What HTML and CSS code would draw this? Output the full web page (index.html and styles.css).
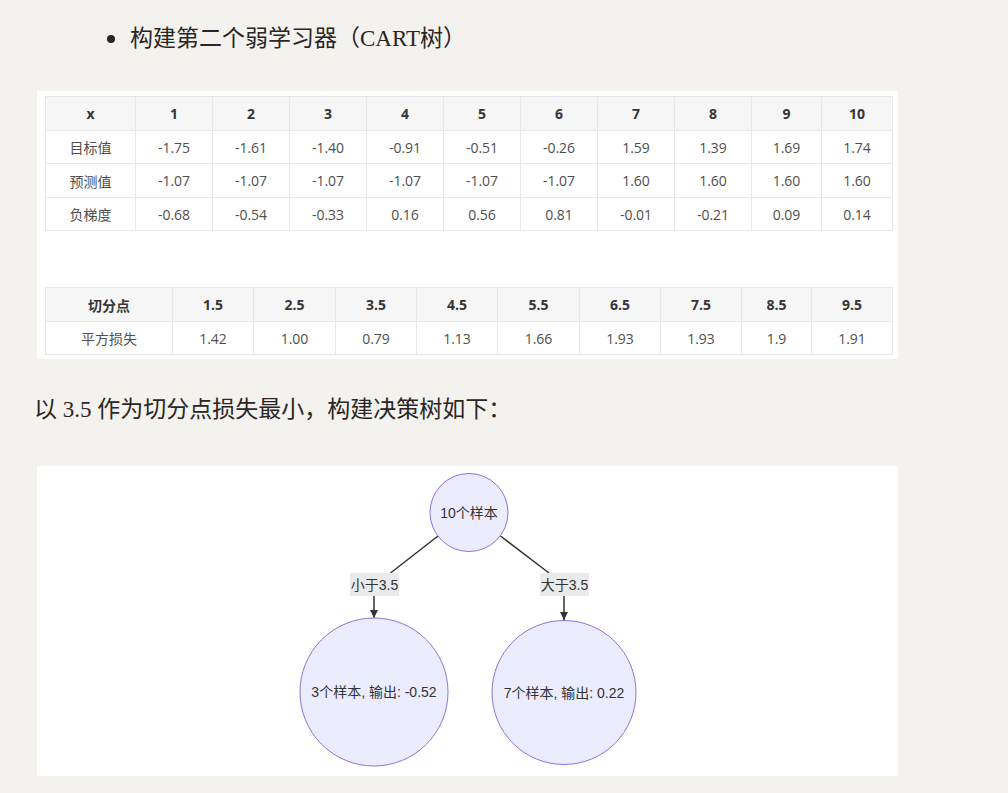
FILE: index.html
```html
<!DOCTYPE html>
<html lang="zh-CN">
<head>
<meta charset="utf-8">
<title>CART</title>
<link rel="stylesheet" href="styles.css">
</head>
<body>
<div class="content">
  <ul class="list">
    <li>构建第二个弱学习器（CART树）</li>
  </ul>

  <div class="panel panel-tables">
    <table class="grid t1">
      <colgroup>
        <col class="w90"><col class="w77"><col class="w77"><col class="w77"><col class="w77"><col class="w77"><col class="w77"><col class="w77"><col class="w77"><col class="w70"><col class="w71">
      </colgroup>
      <thead>
        <tr class="r34"><th>x</th><th>1</th><th>2</th><th>3</th><th>4</th><th>5</th><th>6</th><th>7</th><th>8</th><th>9</th><th>10</th></tr>
      </thead>
      <tbody>
        <tr class="r33"><td>目标值</td><td>-1.75</td><td>-1.61</td><td>-1.40</td><td>-0.91</td><td>-0.51</td><td>-0.26</td><td>1.59</td><td>1.39</td><td>1.69</td><td>1.74</td></tr>
        <tr class="r34"><td>预测值</td><td>-1.07</td><td>-1.07</td><td>-1.07</td><td>-1.07</td><td>-1.07</td><td>-1.07</td><td>1.60</td><td>1.60</td><td>1.60</td><td>1.60</td></tr>
        <tr class="r33"><td>负梯度</td><td>-0.68</td><td>-0.54</td><td>-0.33</td><td>0.16</td><td>0.56</td><td>0.81</td><td>-0.01</td><td>-0.21</td><td>0.09</td><td>0.14</td></tr>
      </tbody>
    </table>

    <table class="grid t2">
      <colgroup>
        <col class="w127"><col class="w81"><col class="w82"><col class="w81"><col class="w81"><col class="w82"><col class="w81"><col class="w81"><col class="w70"><col class="w81">
      </colgroup>
      <thead>
        <tr class="r34"><th>切分点</th><th>1.5</th><th>2.5</th><th>3.5</th><th>4.5</th><th>5.5</th><th>6.5</th><th>7.5</th><th>8.5</th><th>9.5</th></tr>
      </thead>
      <tbody>
        <tr class="r33"><td>平方损失</td><td>1.42</td><td>1.00</td><td>0.79</td><td>1.13</td><td>1.66</td><td>1.93</td><td>1.93</td><td>1.9</td><td>1.91</td></tr>
      </tbody>
    </table>
  </div>

  <p class="para">以 3.5 作为切分点损失最小，构建决策树如下：</p>

  <div class="panel panel-diagram">
    <svg class="tree" width="861" height="310" viewBox="0 0 861 310" xmlns="http://www.w3.org/2000/svg">
      <defs>
        <marker id="arrow" viewBox="0 0 10 10" refX="10" refY="5" markerWidth="8" markerHeight="8" markerUnits="userSpaceOnUse" orient="auto">
          <path d="M0,0 L10,5 L0,10 Z" fill="#333"/>
        </marker>
      </defs>
      <line class="edge" x1="401" y1="70" x2="353.5" y2="107"/>
      <line class="edge" x1="463.5" y1="70" x2="512" y2="107"/>
      <line class="edge" x1="337" y1="130" x2="337" y2="152" marker-end="url(#arrow)"/>
      <line class="edge" x1="527" y1="130" x2="527" y2="154" marker-end="url(#arrow)"/>

      <rect class="lbl" x="313" y="107" width="49" height="23"/>
      <text class="txt" x="337.5" y="119">小于3.5</text>
      <rect class="lbl" x="503" y="107" width="49" height="23"/>
      <text class="txt" x="527.5" y="119">大于3.5</text>

      <circle class="node" cx="432" cy="46.5" r="39"/>
      <text class="txt" x="432" y="47">10个样本</text>

      <circle class="node" cx="337" cy="226" r="74"/>
      <text class="txt" x="337" y="226">3个样本, 输出: -0.52</text>

      <circle class="node" cx="527" cy="226.5" r="72"/>
      <text class="txt" x="527" y="226.5">7个样本, 输出: 0.22</text>
    </svg>
  </div>
</div>
</body>
</html>
```

FILE: styles.css
```css
html, body {
  margin: 0;
  padding: 0;
  background: #f3f2ee;
}

.content {
  padding-left: 34px;
  width: 900px;
  color: #2a2624;
  font-family: "Liberation Serif", "Noto Sans CJK SC", serif;
  font-size: 23px;
  text-spacing-trim: space-all;
}

.list {
  list-style: none;
  margin: 21px 0 0 0;
  padding-left: 73px;
}

.list li {
  display: flex;
  align-items: center;
  line-height: 36px;
  height: 36px;
}

.list li::before {
  content: "";
  width: 8px;
  height: 8px;
  border-radius: 50%;
  background: #2a2624;
  margin-right: 15px;
  flex: none;
}

.panel {
  background: #ffffff;
  margin-left: 3px;
  width: 861px;
  box-sizing: border-box;
}

.panel-tables {
  margin-top: 34px;
  height: 268px;
  padding: 5px 6px 0 8px;
  display: flex;
  flex-direction: column;
  gap: 56px;
}

.grid {
  border-collapse: collapse;
  table-layout: fixed;
  width: 847px;
  font-family: "Open Sans", "Noto Sans CJK SC", sans-serif;
  font-size: 14px;
  color: #4f4f4f;
}

.grid th,
.grid td {
  border: 1px solid #e8e8e8;
  text-align: center;
  padding: 0;
  box-sizing: border-box;
}

.grid th {
  background: #f6f6f6;
  font-weight: 700;
  color: #353535;
}

.r34 { height: 34px; }
.r33 { height: 33px; }

.w70 { width: 70px; }
.w71 { width: 71px; }
.w77 { width: 77px; }
.w81 { width: 81px; }
.w82 { width: 82px; }
.w90 { width: 90px; }
.w127 { width: 127px; }

.para {
  margin: 33px 0 0 0;
  line-height: 36px;
  height: 36px;
}

.panel-diagram {
  margin-top: 38px;
  height: 310px;
}

.tree {
  display: block;
}

.edge {
  stroke: #333;
  stroke-width: 1.5;
  fill: none;
}

.lbl {
  fill: #e8e8e8;
  opacity: 0.9;
}

.node {
  fill: #ececff;
  stroke: #9370db;
  stroke-width: 1;
}

.txt {
  font-family: "Liberation Sans", "Noto Sans CJK SC", sans-serif;
  font-size: 14px;
  fill: #333;
  text-anchor: middle;
  dominant-baseline: central;
}
```
